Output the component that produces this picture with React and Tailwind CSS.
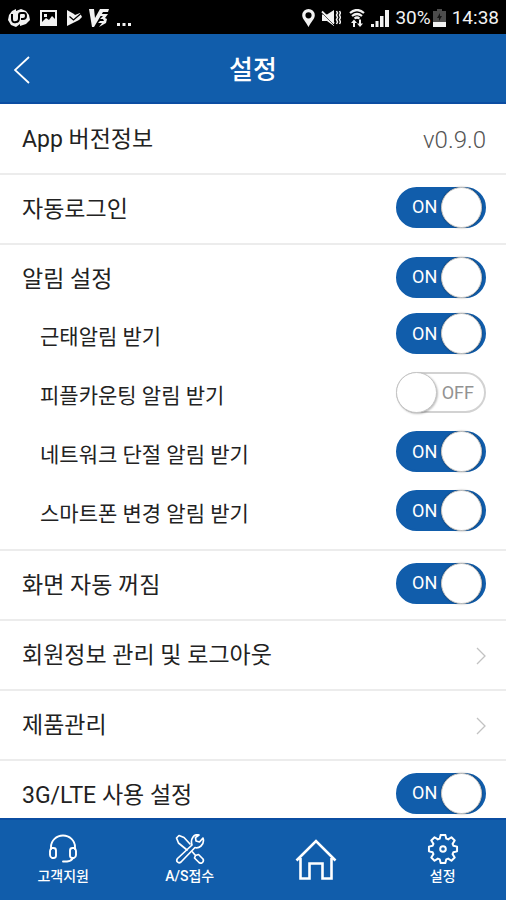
import React, { useState } from 'react';

const StatusBar = () => (
  <div className="flex h-[34px] shrink-0 items-center justify-between bg-black pl-2 pr-[7px] pt-px text-[#f2f2f2]">
    <div className="flex items-center gap-[10px]">
      <svg className="h-[18px] w-[22px]" viewBox="0 0 22 18">
        <path d="M4 2 8 0 8 2 13 0 18 2 21 6 22 11 18 15 12 17 12 15 8 18 3 16 0 11 1 6Z" fill="currentColor" />
        <path d="M4 5v5q0 4 4 3q3 0 3-4V6q0-2 2-2h3q2 0 2 3t-3 3h-2" fill="none" stroke="#000" strokeWidth="2" />
      </svg>
      <svg className="h-[16px] w-[17px]" viewBox="0 0 17 16">
        <rect x="1" y="1" width="15" height="14" fill="none" stroke="currentColor" strokeWidth="2" />
        <path d="M2 12l4-4 3 2 3-4 4 4v4H2z" fill="currentColor" />
        <rect x="4" y="4" width="3" height="3" fill="currentColor" />
      </svg>
      <svg className="h-[16px] w-[15px]" viewBox="0 0 15 16">
        <path d="M0 0l7 4 1 1 5-2 2 4-3 3-12 6z" fill="currentColor" />
        <path d="M2.500 6.500l4 3.500L14 3.500" fill="none" stroke="#000" strokeWidth="1.300" />
      </svg>
      <svg className="-ml-[3px] h-[18px] w-[21px]" viewBox="0 0 21 18">
        <path d="M0 0h5l1 9 5-9h9l-1 3h-5L5 18H3z" fill="currentColor" />
        <path d="M12 5h7l-3 4 2 1-1 4-7 4 3-4H9l2-2h4l-1-2h-3l3-3h-4z" fill="currentColor" />
      </svg>
      <svg className="-ml-[4px] h-[18px] w-[16px]" viewBox="0 0 16 18">
        <path d="M1 14h3v3H1zM6.500 14h3v3h-3zM12 14h3v3h-3z" fill="currentColor" />
      </svg>
    </div>
    <div className="flex items-center gap-[6px]">
      <svg className="h-[18px] w-[13px]" viewBox="0 0 13 18">
        <path fillRule="evenodd" d="M6.500 0A6.300 6.300 0 0 0 .2 6.300C.2 10 4 13 6.500 18 9 13 12.800 10 12.800 6.300A6.300 6.300 0 0 0 6.500 0zm0 3.200a3.100 3.100 0 1 1 0 6.200 3.100 3.100 0 0 1 0-6.200z" fill="currentColor" />
      </svg>
      <svg className="h-[18px] w-[20px]" viewBox="0 0 20 18">
        <path d="M1 5.500h5L13 1v16l-7-5H1z" fill="currentColor" />
        <path d="M1 4l12 12" stroke="#000" strokeWidth="1" />
        <path d="M1 2.500l12 12" stroke="currentColor" strokeWidth="1.800" />
        <path d="M15.500 2l1 2-1 2 1 2.500-1 2 1 2.500-1 2M18.500 2l1 2-1 2 1 2.500-1 2 1 2.500-1 2" fill="none" stroke="currentColor" strokeWidth="1.500" />
      </svg>
      <svg className="ml-[2px] h-[18px] w-[16px]" viewBox="0 0 16 18">
        <path d="M1 4q7-6 14 0M3 7q5-4 10 0M5.500 9.500q2.500-2 5 0" fill="none" stroke="currentColor" strokeWidth="2.200" />
        <path d="M5 10.500l3 3.500H6v4H4v-4H2zM11 18l-3-3.500h2v-4h2v4h2z" fill="currentColor" />
      </svg>
      <svg className="h-[18px] w-[18px]" viewBox="0 0 18 18">
        <path d="M0 15h3v3H0zM4.500 12h3v6h-3zM9 7h3.500v11H9zM14 1h4v17h-4z" fill="currentColor" />
      </svg>
      <span className="text-[19px] leading-6">30%</span>
      <svg className="-ml-[4px] h-[18px] w-[13px]" viewBox="0 0 13 18">
        <path d="M4 0h5v2h4v11H0V2h4z" fill="#4c4c4c" />
        <path d="M0 13h13v5H0z" fill="currentColor" />
        <path d="M7 4L4 9h2v3l3-5H7z" fill="#151515" />
      </svg>
      <span className="text-[19px] leading-6">14:38</span>
    </div>
  </div>
);

const Toggle = ({ id, checked, onChange }) => (
  <span className="relative mb-1.5 block h-[41px] w-[90px] shrink-0">
    <input
      id={id}
      type="checkbox"
      checked={checked}
      onChange={onChange}
      className="block h-full w-full cursor-pointer appearance-none rounded-full border-2 border-[#d2d2d2] bg-white checked:border-[#115dab] checked:bg-[#115dab]"
    />
    <span
      className={`pointer-events-none absolute inset-y-0 flex items-center text-[18px] ${
        checked ? 'left-4 text-white' : 'right-3 text-[#929292]'
      }`}
    >
      {checked ? 'ON' : 'OFF'}
    </span>
    <span
      className={`pointer-events-none absolute inset-y-0 w-[41px] rounded-full border bg-white ${
        checked
          ? 'right-1 border-[#c9c6c2] shadow-[0_0_2px_rgba(0,0,0,0.4)]'
          : 'left-0 border-[#c4c4c4] shadow-[1px_1px_2px_rgba(0,0,0,0.25)]'
      }`}
    />
  </span>
);

const ToggleRow = ({ id, label, checked, onChange, className }) => (
  <div className={`flex items-center justify-between pr-5 ${className}`}>
    <label htmlFor={id}>{label}</label>
    <Toggle id={id} checked={checked} onChange={onChange} />
  </div>
);

const LinkRow = ({ label }) => (
  <a href="#" className="flex h-[70px] items-center justify-between border-b-2 border-[#ececec] pl-[22px] pr-5 pt-0.5">
    <span>{label}</span>
    <svg className="h-[18px] w-[10px]" viewBox="0 0 10 18" fill="none" stroke="#c2c2c2" strokeWidth="1.300">
      <path d="M1 1l8 8-8 8" />
    </svg>
  </a>
);

const NavItem = ({ label, children }) => (
  <a href="#" className="flex flex-1 flex-col items-center pt-[14px] text-[14px] font-medium leading-5">
    {children}
    <span className="mt-0.5">{label}</span>
  </a>
);

const subItems = [
  { id: 'attendance', label: '근태알림 받기' },
  { id: 'counting', label: '피플카운팅 알림 받기' },
  { id: 'network', label: '네트워크 단절 알림 받기' },
  { id: 'phone', label: '스마트폰 변경 알림 받기' },
];

const App = () => {
  const [settings, setSettings] = useState({
    autoLogin: true,
    alarm: true,
    attendance: true,
    counting: false,
    network: true,
    phone: true,
    screenOff: true,
    mobileData: true,
  });

  const bind = (id) => ({
    id,
    checked: settings[id],
    onChange: () => setSettings((prev) => ({ ...prev, [id]: !prev[id] })),
  });

  return (
    <div className="flex h-screen flex-col bg-white font-['Roboto','Noto_Sans_CJK_KR',sans-serif] text-[#222]">
      <StatusBar />

      {/* Header */}
      <header className="grid h-[70px] shrink-0 grid-cols-[1fr_auto_1fr] items-center border-b-2 border-[#0b4da2] bg-[#115dab] px-[14px] pt-1 text-white">
        <button type="button" aria-label="뒤로" className="justify-self-start">
          <svg className="h-[28px] w-[16px]" viewBox="0 0 16 28" fill="none" stroke="currentColor" strokeWidth="1.800">
            <path d="M15 1L1 14l14 13" />
          </svg>
        </button>
        <h1 className="text-[26px] font-medium leading-8">설정</h1>
      </header>

      {/* Settings */}
      <main className="min-h-0 flex-1 overflow-y-auto pt-px text-[23px] leading-8 [scrollbar-width:none]">
        <div className="flex h-[70px] items-center justify-between border-b-2 border-[#ececec] pl-[22px] pr-5 pt-0.5">
          <span>App 버전정보</span>
          <span className="text-[24px] font-light text-[#555]">v0.9.0</span>
        </div>
        <ToggleRow {...bind('autoLogin')} label="자동로그인" className="h-[70px] border-b-2 border-[#ececec] pl-[22px] pt-0.5" />

        <section className="border-b-2 border-[#ececec] py-1.5">
          <ToggleRow {...bind('alarm')} label="알림 설정" className="h-14 pl-[22px] pt-0.5" />
          <div className="text-[21px]">
            {subItems.map((item) => (
              <ToggleRow key={item.id} {...bind(item.id)} label={item.label} className="h-[59px] pl-10" />
            ))}
          </div>
        </section>

        <ToggleRow {...bind('screenOff')} label="화면 자동 꺼짐" className="h-[70px] border-b-2 border-[#ececec] pl-[22px] pt-0.5" />
        <LinkRow label="회원정보 관리 및 로그아웃" />
        <LinkRow label="제품관리" />
        <ToggleRow {...bind('mobileData')} label="3G/LTE 사용 설정" className="h-[70px] border-b-2 border-[#ececec] pl-[22px] pt-0.5" />
      </main>

      {/* Bottom navigation */}
      <nav className="flex h-[82px] shrink-0 border-t-2 border-[#0b4da2] bg-[#115dab] text-white">
        <NavItem label="고객지원">
          <svg className="h-[30px] w-[30px]" viewBox="0 0 30 30" fill="none" stroke="currentColor" strokeWidth="1.900" strokeLinecap="round" strokeLinejoin="round">
            <path d="M3 15v-2a12 11.500 0 0 1 24 0v2" />
            <path d="M4 14h1.500q2.500 0 2.500 2.500v5Q8 24 5.500 24H4q-2-1-2-3v-4q0-2 2-3zM26 14h-1.500Q22 14 22 16.500v5q0 2.500 2.500 2.500H26q2-1 2-3v-4q0-2-2-3z" />
            <path d="M25 24q-1.500 3-6 3.500h-4" />
          </svg>
        </NavItem>
        <NavItem label="A/S접수">
          <svg className="h-[30px] w-[30px]" viewBox="0 0 30 30" fill="none" stroke="currentColor" strokeWidth="1.700" strokeLinejoin="round" strokeLinecap="round">
            <path d="M17 11L2.500 24.500q-1.500 2 0 3.500t3.500 0L20 13.500q3 1 6-1.500 3.500-3 2-8l-3.500 4-3.500-1-.5-3.500L24 1q-4-1-6 2-2.500 3.500-1 8z" />
            <path d="M1.500 4L4 1.500l5 2 6 6.500M1.500 4l2 5 8.500 7" />
            <path d="M17.500 18l3 3.500 3-1 4.500 4.500q1 2-.5 3.500t-3.500 0L19.500 24l1-2.500" />
          </svg>
        </NavItem>
        <a href="#" aria-label="홈" className="flex flex-1 justify-center pt-[18px]">
          <svg className="h-[43px] w-[42px]" viewBox="0 0 42 43" fill="none" stroke="currentColor" strokeWidth="2.600" strokeLinejoin="miter">
            <path d="M1.500 22.500L21 3l19.500 19.500M5.500 20v20.500h9V25.500h13v15h9V20" />
          </svg>
        </a>
        <NavItem label="설정">
          <svg className="h-[30px] w-[32px]" viewBox="0 0 32 32" fill="none" stroke="currentColor" strokeWidth="2.100" strokeLinejoin="round">
            <path d="M13.500 1h5l1 4 2 .8L25 3.500 28.500 7 26.200 10.500l.8 2 4 1v5l-4 1-.8 2L28.500 25 25 28.500 21.500 26.200l-2 .8-1 4h-5l-1-4-2-.8L7 28.500 3.500 25l2.300-3.500-.8-2-4-1v-5l4-1 .8-2L3.500 7 7 3.500l3.500 2.300 2-.8z" />
            <circle cx="16" cy="16" r="3" />
          </svg>
        </NavItem>
      </nav>
    </div>
  );
};

export default App;
